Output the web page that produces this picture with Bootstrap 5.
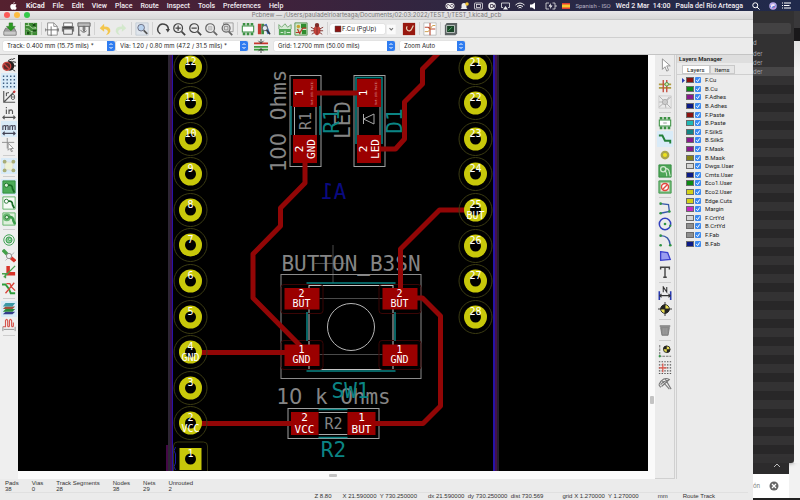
<!DOCTYPE html>
<html lang="en">
<head>
<meta charset="utf-8">
<meta name="viewport" content="width=device-width, initial-scale=1">
<title>Pcbnew — TEST_1.kicad_pcb</title>
<link href="https://cdn.jsdelivr.net/npm/bootstrap@5.3.0/dist/css/bootstrap.min.css" rel="stylesheet">
<style>
  body { font-family: Inter, "Liberation Sans", sans-serif; font-size: 6px; line-height: 8px; color: #222; background: #f4f4f4; }
  a { color: inherit; text-decoration: none; }
  svg { display: block; }
  .menubar { height: 11px; font-family: Roboto, "Liberation Sans", sans-serif; font-weight: 500; font-size: 7px; color: #f3eef3; background: linear-gradient(90deg, #55212f, #43213a 30%, #2c2742 60%, #202a4c); padding: 0 9px 0 10px; }
  .menubar nav { gap: 8px; margin-left: 9px; }
  .menubar .tray { gap: 5px; }
  .menubar .dim { font-size: 6px; font-weight: 400; color: #b5b1c4; }
  .strong { font-weight: 600; }
  .appwin { background: #ebebeb; }
  .titlebar { height: 9px; background: linear-gradient(#e9e7e9, #d8d8d8); color: #777; border-bottom: 1px solid #c8c8c8; }
  .doctitle { padding-right: 60px; }
  .lights { gap: 4px; width: 60px; padding-left: 4px; }
  .lights button { width: 6px; height: 6px; border: 0; border-radius: 50%; padding: 0; }
  .l-red { background: #fc5b57; } .l-yel { background: #fdbc40; } .l-grn { background: #34c84a; }
  .toolrow { height: 18px; padding-left: 2px; border-bottom: 1px solid #cfcfcf; }
  .selrow { height: 17px; padding-left: 3px; gap: 1px; border-bottom: 1px solid #c4c4c4; }
  .ib { width: 16px; height: 16px; padding: 1px; border: 0; background: transparent; flex: none; }
  .ib svg { width: 14px; height: 14px; }
  .ib.on { background: #d9ebf8; }
  .vs { width: 1px; height: 13px; margin: 0 2px; background: #d2d2d2; flex: none; }
  .hs { height: 1px; width: 12px; margin: 2px 0; background: #cdcdcd; flex: none; }
  .pick { height: 10px; background: #fff; border-radius: 2px; box-shadow: 0 0 1px #999; overflow: hidden; }
  .pick select { appearance: none; border: 0; background: #fff; color: #222; padding: 0 0 0 4px; font-size: 6px; line-height: 10px; flex: 1; min-width: 0; height: 10px; }
  .pick svg { width: 8px; height: 10px; flex: none; }
  .w-track { width: 112px; } .w-via { width: 132px; } .w-grid { width: 121px; } .w-zoom { width: 65px; } .w-layer { width: 55px; }
  .leftbar { width: 18px; padding-top: 2px; background: #efefef; }
  .rightbar { width: 20px; padding-top: 2px; border-right: 1px solid #d0d0d0; border-bottom: 1px solid #d0d0d0; }
  .board { background: #000; min-height: 0; }
  .board svg { width: 100%; height: 100%; }
  .hbar { height: 8px; background: #fbfbfb; } .vbar { width: 7px; background: #fafafa; }
  .hbar i, .vbar i { background: #c3c3c3; border-radius: 1px; }
  .hbar i { width: 8px; height: 3px; } .vbar i { width: 4px; height: 8px; }
  .g-a { flex: 82; } .g-b { flex: 18; } .g-c { flex: 1; }
  .layers { width: 77px; border-left: 1px solid #d0d0d0; margin-left: 1px; font-family: Roboto, "Liberation Sans", sans-serif; }
  .layers h2 { font-size: 6px; line-height: 8px; margin: 0; padding-left: 2px; background: #dedede; color: #222; }
  .tabrow { padding: 2px 0 0 5px; border-bottom: 1px solid #cfcfcf; height: 12px; }
  .tabrow button { font-size: 6px; line-height: 7px; padding: 0 4px; border: 1px solid #c9c9c9; background: #e6e6e6; color: #222; }
  .tabrow button.cur { background: #fff; }
  .layerlist { display: grid; grid-auto-rows: 1fr; height: 173px; padding: 1px 0 0 5px; }
  .layerlist label { display: flex; align-items: center; }
  .layerlist input[type=checkbox] { appearance: none; width: 6px; height: 6px; margin: 0 4px 0 1px; border-radius: 1px; background: #3c8af0 url("data:image/svg+xml,%3Csvg xmlns='http://www.w3.org/2000/svg' viewBox='0 0 6 6'%3E%3Cpath d='M1.3 3.2L2.6 4.6 4.7 1.4' fill='none' stroke='white'/%3E%3C/svg%3E"); }
  .arrow { width: 3px; height: 5px; }
  .chip { width: 8px; height: 6px; border: 1px solid #6b6b6b; margin-left: 1px; }
  .stats { height: 21px; padding: 1px 5px 0; line-height: 6px; font-family: "Liberation Sans", sans-serif; color: #333; }
  .stats dl { gap: 13px; margin: 0; }
  .stats dt { font-weight: 400; } .stats dd { margin: 0; }
  .coords { gap: 11px; padding-right: 33px; height: 8px; border-top: 1px solid #e0e0e0; line-height: 7px; }
  .behind { width: 47px; background: #f2f2f2; }
  .finder { width: 41px; background: #323132; color: #a9a9a9; border-radius: 0 0 3px 0; box-shadow: 0 0 4px #777; }
  .finder .head { height: 26px; padding: 12px 3px 3px 0; }
  .finder input { width: 100%; height: 11px; border: 0; border-radius: 0 2px 2px 0; background: #434243; display: block; }
  .finder li { height: 9px; line-height: 9px; }
  .finder li:first-child { height: 12px; line-height: 12px; }
  .finder .lit { background: #474647; }
  .stripes { background: repeating-linear-gradient(#333233 0 9px, #282728 9px 18px); }
  .finder .foot { height: 6px; }
  .edge { width: 6px; background: linear-gradient(#39383a 0 17px, #19181a 17px 30px, #e4e4e4 30px, #f4f4f4 60px); }
  .under { height: 11px; width: 36px; background: #2c2b2c; color: #aaa; padding-right: 8px; }
  .note { height: 24px; width: 36px; background: #fff; color: #777; padding-right: 10px; }
  .note button { border: 0; padding: 0; background: none; width: 10px; height: 10px; }
  .baseline { height: 2px; background: #222; }
  .mono { font-family: "DejaVu Sans Mono", monospace; text-anchor: middle; }
  .plain { font-family: "DejaVu Sans", sans-serif; }
</style>
<script src="https://cdn.jsdelivr.net/npm/bootstrap@5.3.0/dist/js/bootstrap.bundle.min.js"></script>
</head>
<body class="vh-100 d-flex flex-column overflow-hidden">

<header class="menubar d-flex align-items-center text-nowrap">
  <svg width="7" height="8" viewBox="0 0 14 16" fill="#fff" role="img" aria-label="Apple"><path d="M9.5 0C9.6 2 8 3.600 6.600 3.500 6.500 1.700 8 .2 9.500 0zM7 4.600C7.800 4.600 8.600 3.900 10 3.900c1.200 0 2.300.6 3 1.600-2.600 1.600-2.200 5 .5 6-.6 1.700-2 4.200-3.600 4.200-1 0-1.500-.6-2.700-.6s-1.700.6-2.700.6C2.600 15.700.5 12.200.5 9c0-3 2-5 4-5 1.200 0 1.900.6 2.500.6z"/></svg>
  <nav class="d-flex flex-grow-1">
    <a href="#" class="fw-bold">KiCad</a><a href="#">File</a><a href="#">Edit</a><a href="#">View</a><a href="#">Place</a><a href="#">Route</a><a href="#">Inspect</a><a href="#">Tools</a><a href="#">Preferences</a><a href="#">Help</a>
  </nav>
  <div class="tray d-flex align-items-center">
    <svg width="10" height="8" viewBox="0 0 20 16"><rect x="1" y="2" width="18" height="12" rx="6" fill="#eee"/><path d="M6 11a3 3 0 1 1 3-4l3 3a3 3 0 1 0-1-3" fill="none" stroke="#3a2a44" stroke-width="1.500"/></svg>
    <svg width="9" height="8" viewBox="0 0 18 16"><path d="M3 12V7a5 5 0 0 1 10 0v5l2 2H1z" fill="#eee"/><circle cx="14" cy="4" r="3.500" fill="#f4c534"/></svg>
    <svg width="9" height="8" viewBox="0 0 18 16" fill="none" stroke="#eee" stroke-width="1.500"><rect x="1" y="2" width="16" height="12" rx="1"/><rect x="5" y="5" width="8" height="6"/></svg>
    <svg width="8" height="8" viewBox="0 0 16 16"><circle cx="8" cy="8" r="7.500" fill="#eee"/><path d="M5 5h5v6H5zM10 8l3-2v5z" fill="none" stroke="#33283f" stroke-width="1.500"/></svg>
    <svg width="9" height="8" viewBox="0 0 18 16"><path d="M4 11H1V2h16v9h-3" fill="none" stroke="#eee" stroke-width="1.600"/><path d="M9 8l5 7H4z" fill="#eee"/></svg>
    <svg width="10" height="8" viewBox="0 0 20 16" fill="none" stroke="#eee" stroke-width="2"><path d="M1 6q9-8 18 0M4 9q6-5 12 0M7 12q3-2.500 6 0"/></svg>
    <svg width="6" height="8" viewBox="0 0 12 16"><path d="M0 5h4l6-4v14l-6-4H0z" fill="#fff"/></svg>
    <svg class="ms-1" width="12" height="8" viewBox="0 0 24 16"><path d="M8 2H2v12h6M15 2h5v12h-5M22 6v4" fill="none" stroke="#eee" stroke-width="1.500"/><path d="M12 2L7 9h4l-1 5 5-7h-4z" fill="#fff"/></svg>
    <svg width="8" height="6" viewBox="0 0 16 12"><path fill="#e03b30" d="M0 0h16v12H0z"/><path fill="#f8c730" d="M0 3h16v6H0z"/></svg>
    <span class="dim">Spanish - ISO</span>
    <span>Wed 2 Mar&nbsp; 14:00</span>
    <span>Paula del Río Arteaga</span>
    <svg class="ms-1" width="8" height="8" viewBox="0 0 16 16" fill="none" stroke="#fff" stroke-width="2"><circle cx="6.500" cy="6.500" r="5"/><path d="M10 10l5 5"/></svg>
    <svg class="ms-1" width="8" height="8" viewBox="0 0 16 16"><circle cx="8" cy="8" r="7.500" fill="#b7a7e8"/><path d="M2 9q6-7 12-2-5 8-12 2z" fill="#3c7ee0"/><path d="M4 6q5-4 9 1-6 0-9 5z" fill="#f5e3f2"/><path d="M7 12q4 0 5-5 1 7-5 5z" fill="#e24e8c"/></svg>
    <svg width="9" height="7" viewBox="0 0 18 14" stroke="#fff" stroke-width="2"><path d="M0 2h2M4 2h14M0 7h2M4 7h11M0 12h2M4 12h14"/></svg>
  </div>
</header>

<div class="d-flex flex-grow-1 overflow-hidden">
<main class="appwin d-flex flex-column flex-grow-1 overflow-hidden">
  <div class="titlebar d-flex align-items-center">
    <div class="lights d-flex"><button class="l-red" aria-label="Close"></button><button class="l-yel" aria-label="Minimise"></button><button class="l-grn" aria-label="Zoom"></button></div>
    <div class="doctitle flex-grow-1 text-center text-nowrap">Pcbnew — /Users/pauladelrioarteaga/Documents/02:03:2022/TEST_1/TEST_1.kicad_pcb</div>
  </div>

  <div class="toolrow d-flex align-items-center">
    <button class="ib" aria-label="Save"><svg viewBox="0 0 16 16"><path d="M3 7h10l2 4v4H1v-4z" fill="#9b9b9b" stroke="#777"/><path d="M1.500 11h13v3.500h-13z" fill="#c9c9c9"/><path d="M7 1h4v4h3l-5 5-5-5h3z" fill="#2c9b23" stroke="#1d6b17" stroke-width=".6"/></svg></button>
    <i class="vs"></i>
    <button class="ib" aria-label="Board setup"><svg viewBox="0 0 16 16"><path fill="#3d8a34" d="M1 1h14v14H1z"/><path d="M2 4h4l3 3h5M2 8h3l3 3h6M5 1v3M11 1v4l3 2M3 14v-3M9 15v-3" stroke="#b9dcae" fill="none"/><path fill="#174d13" d="M10 2h3v3h-3zM3 11h3v3H3zM10 9h4v2h-4z"/></svg></button>
    <i class="vs"></i>
    <button class="ib" aria-label="Page settings"><svg viewBox="0 0 16 16"><path d="M3 1h7l4 4v10H3z" fill="#fff" stroke="#888"/><path d="M10 1v4h4" fill="none" stroke="#888"/><path d="M0 9h16M7 5v11M0 7v4M15 7v4" stroke="#666" fill="none"/></svg></button>
    <button class="ib" aria-label="Print"><svg viewBox="0 0 16 16"><path d="M3 1h10v4H3z" fill="#fff" stroke="#666"/><path d="M1 5h14v6H1z" fill="#777"/><path d="M3 8h10v6H3z" fill="#eee" stroke="#555"/><path d="M2 6h12" stroke="#333"/></svg></button>
    <button class="ib" aria-label="Plot"><svg viewBox="0 0 16 16" fill="none" stroke="#666"><path d="M1 1h14v4H1z" fill="#bbb"/><path d="M2 5v10M14 5v10M1 15h3M12 15h3" stroke-width="1.500"/><path d="M7 5l2 0 0 4-1 2-1-2z" fill="#999"/><path d="M4 9q3 5 7 1"/></svg></button>
    <i class="vs"></i>
    <button class="ib" aria-label="Undo"><svg viewBox="0 0 16 16"><path d="M2 7l5-5v3q8 0 7 6-1 3-5 4 3-3 2-5-1-2-4-2v3z" fill="#f3c64d"/></svg></button>
    <button class="ib" aria-label="Redo"><svg viewBox="0 0 16 16"><path d="M14 7L9 2v3q-8 0-7 6 1 3 5 4-3-3-2-5 1-2 4-2v3z" fill="#d3e8cc"/></svg></button>
    <i class="vs"></i>
    <button class="ib" aria-label="Find"><svg viewBox="0 0 16 16"><path d="M1 1h14v14H1z" fill="#dfe5ec" stroke="#c4ccd4"/><circle cx="7" cy="6.500" r="3.800" fill="#b9d2ee" stroke="#667"/><path d="M10 9.500l4 4" stroke="#555" stroke-width="2"/></svg></button>
    <i class="vs"></i>
    <button class="ib" aria-label="Refresh"><svg viewBox="0 0 16 16"><path d="M5 13.500A6 6 0 1 1 14 9" fill="none" stroke="#444" stroke-width="1.700"/><path d="M11 8h5l-2.500 4z" fill="#444"/></svg></button>
    <button class="ib" aria-label="Zoom in"><svg viewBox="0 0 16 16" fill="none" stroke="#444"><circle cx="7" cy="7" r="5" stroke-width="1.400"/><path d="M4 7h6M7 4v6" stroke-width="1.400"/><path d="M11 11l4 4" stroke-width="2"/></svg></button>
    <button class="ib" aria-label="Zoom out"><svg viewBox="0 0 16 16" fill="none" stroke="#444"><circle cx="7" cy="7" r="5" stroke-width="1.400"/><path d="M4 7h6" stroke-width="1.400"/><path d="M11 11l4 4" stroke-width="2"/></svg></button>
    <button class="ib" aria-label="Zoom to fit"><svg viewBox="0 0 16 16" fill="none" stroke="#666"><circle cx="7" cy="7" r="5" stroke-width="1.400"/><path d="M5 5h4v4H5z" fill="#ccc" stroke="#bbb"/><path d="M11 11l4 4" stroke-width="2"/></svg></button>
    <button class="ib" aria-label="Zoom to selection"><svg viewBox="0 0 16 16" fill="none" stroke="#666"><path d="M4 1h11v10H4z" stroke="#999"/><circle cx="7" cy="7" r="4.500" fill="#ddd" stroke-width="1.400"/><path d="M5 5h4v4H5z" stroke="#888"/><path d="M10 11l4 4" stroke-width="2"/></svg></button>
    <i class="vs"></i>
    <button class="ib" aria-label="Footprint editor"><svg viewBox="0 0 16 16"><path d="M1.500 4.500h13v7h-13z" fill="#fff" stroke="#3b9142" stroke-width="1.200"/><path d="M2 2.500h3M6.500 2.500h3M11 2.500h3M2 13.500h3M6.500 13.500h3M11 13.500h3" stroke="#3b9142" stroke-width="3"/></svg></button>
    <button class="ib" aria-label="Footprint libraries"><svg viewBox="0 0 16 16"><path d="M1 2h4v12H1z" fill="#c43b31"/><path d="M5 2h3v12H5z" fill="#3b8a3b"/><path d="M8 3l3-1 4 11-3 1z" fill="#3a6ab4"/><circle cx="9" cy="7" r="3" fill="#dfe9f5" stroke="#555"/><path d="M11 9l4 5" stroke="#333" stroke-width="1.500"/></svg></button>
    <i class="vs"></i>
    <button class="ib" aria-label="Update from schematic"><svg viewBox="0 0 16 16"><path d="M1 8h14v7H1z" fill="#54a758"/><path d="M1 8V3l3 3 4-4 3 4 4-3v5" fill="#d6ead4" stroke="#6da46d"/><path d="M3 12h3M8 10v4M10 12h4" stroke="#e8f5e8"/></svg></button>
    <button class="ib" aria-label="Load netlist"><svg viewBox="0 0 16 16"><path fill="#cfe6c9" stroke="#55904f" d="M1 1h14v14H1z"/><path fill="#2f8c2e" d="M8 2h6v5H8zM9 9h5v5H9z"/><circle cx="5" cy="5" r="2" fill="#c8a52f"/><path d="M2 12h5l3-5h4M4 8l3 6" stroke="#b8342a" fill="none" stroke-width="1.400"/></svg></button>
    <button class="ib" aria-label="Design rules check"><svg viewBox="0 0 16 16"><ellipse cx="8" cy="9.500" rx="4" ry="5.500" fill="#c5433b"/><circle cx="8" cy="3.500" r="2.500" fill="#7c2c28"/><path d="M8 5v10M1 6l4 2M1 10h4M2 14l3-2M15 6l-4 2M15 10h-4M14 14l-3-2" stroke="#7c2c28"/></svg></button>
    <i class="vs"></i>
    <label class="pick w-layer d-flex align-items-center ps-1"><svg viewBox="0 0 8 10"><path fill="#8b1210" stroke="#555" stroke-width=".5" d="M1 2h6v6H1z"/></svg><select class="p-0" aria-label="Active layer"><option>F.Cu (PgUp)</option></select></label>
    <button class="ib" aria-label="Open layer list"><svg viewBox="0 0 16 16"><path fill="#fafafa" d="M1 3h10v11H1z"/><path d="M4 7l2 2 2-2" fill="none" stroke="#777" stroke-width="1.300"/></svg></button>
    <button class="ib" aria-label="Layer pair"><svg viewBox="0 0 16 16"><path fill="#98180f" d="M1 1h14v14H1z"/><path d="M6 5a3 3 0 1 0 5 3l2-4" fill="none" stroke="#e8d2b8" stroke-width="1.400"/></svg></button>
    <i class="vs"></i>
    <button class="ib" aria-label="Interactive router"><svg viewBox="0 0 16 16"><path fill="#fff" stroke="#bbb" d="M1 1h14v14H1z"/><path d="M8 1v14M2 6h4l2 2h6" stroke="#ba4a36" fill="none" stroke-width="1.300"/><path d="M2 11h4l2-3 3-4h3" stroke="#c7923a" fill="none"/></svg></button>
    <i class="vs"></i>
    <button class="ib" aria-label="Scripting console"><svg viewBox="0 0 16 16"><path d="M3 1h12v12l-2 2H1V4z" fill="#5d6364"/><path d="M3 4h9v8H3z" fill="#1a4428" stroke="#c5cdc8"/><path d="M5 10l4-4" stroke="#55b872"/></svg></button>
  </div>

  <div class="selrow d-flex align-items-center">
    <label class="pick w-track d-flex"><select aria-label="Track width"><option>Track: 0.400 mm (15.75 mils) *</option></select><svg viewBox="0 0 8 10"><path fill="#2f7cf0" d="M0 0h8v10H0z"/><path d="M2.500 4L4 2.500 5.500 4M2.500 6L4 7.500 5.500 6" fill="none" stroke="#fff"/></svg></label>
    <label class="pick w-via d-flex"><select aria-label="Via size"><option>Via: 1.20 / 0.80 mm (47.2 / 31.5 mils) *</option></select><svg viewBox="0 0 8 10"><path fill="#2f7cf0" d="M0 0h8v10H0z"/><path d="M2.500 4L4 2.500 5.500 4M2.500 6L4 7.500 5.500 6" fill="none" stroke="#fff"/></svg></label>
    <button class="ib ms-1" aria-label="Automatic track width"><svg viewBox="0 0 16 16"><path d="M0 5h16" stroke="#c7362c" stroke-width="2"/><path d="M0 9h16M0 12h16" stroke="#3e9a3e" stroke-width="2"/><path d="M8 0v5M8 11v5M5 2l3 3 3-3M5 14l3-3 3 3" stroke="#333" fill="none"/></svg></button>
    <label class="pick w-grid d-flex mx-1"><select aria-label="Grid"><option>Grid: 1.2700 mm (50.00 mils)</option></select><svg viewBox="0 0 8 10"><path fill="#2f7cf0" d="M0 0h8v10H0z"/><path d="M2.500 4L4 2.500 5.500 4M2.500 6L4 7.500 5.500 6" fill="none" stroke="#fff"/></svg></label>
    <label class="pick w-zoom d-flex"><select aria-label="Zoom"><option>Zoom Auto</option></select><svg viewBox="0 0 8 10"><path fill="#2f7cf0" d="M0 0h8v10H0z"/><path d="M2.500 4L4 2.500 5.500 4M2.500 6L4 7.500 5.500 6" fill="none" stroke="#fff"/></svg></label>
  </div>

  <div class="d-flex flex-grow-1 overflow-hidden">
    <div class="leftbar d-flex flex-column align-items-center flex-shrink-0">
      <button class="ib" aria-label="DRC off"><svg viewBox="0 0 16 16"><ellipse cx="9" cy="9" rx="5" ry="5.500" fill="#26201f"/><path d="M11 2l4-2M12 4l4 1M13 9h3M12 13l3 2M7 3l4-2" stroke="#222"/><circle cx="5.500" cy="9.500" r="4.500" fill="#5c2a2a" stroke="#c8433e" stroke-width="1.600"/><path d="M2.500 6.500l6 6" stroke="#c8433e" stroke-width="1.600"/></svg></button>
      <button class="ib on" aria-label="Show grid"><svg viewBox="0 0 16 16"><path d="M1 2.500h14M1 6.500h14M1 10.500h14M1 14.500h14" stroke="#3c5c80" stroke-width="1.600" stroke-dasharray="1.600 2.500"/></svg></button>
      <button class="ib" aria-label="Polar coordinates"><svg viewBox="0 0 16 16" fill="none" stroke="#555"><path d="M2 1v13h13M2 14L14 2" stroke-width="1.300"/><path d="M5 7V3M5 4q1-1 3-1" stroke="#333"/><ellipse cx="12.500" cy="8" rx="2" ry="3"/><path d="M10.500 8h4"/><circle cx="14" cy="2" r="1" fill="#c33" stroke="#c33"/></svg></button>
      <button class="ib" aria-label="Units in inches"><svg viewBox="0 0 16 16" fill="none" stroke="#555" stroke-width="1.300"><path d="M5 4v5M5 1v1.500M8 9V4M8 6q3-3 4 0v3M1 13h14M3 11l-2 2 2 2M13 11l2 2-2 2"/></svg></button>
      <button class="ib on" aria-label="Units in millimetres"><svg viewBox="0 0 16 16" fill="none" stroke="#445" stroke-width="1.300"><path d="M1 9V4M1 5q3-2 3 0v4M4 5q3-2 3 0v4M9 9V4M9 5q3-2 3 0v4M12 5q3-2 3 0v4M1 13h14M3 11l-2 2 2 2M13 11l2 2-2 2"/></svg></button>
      <button class="ib" aria-label="Cursor shape"><svg viewBox="0 0 16 16" fill="none" stroke="#888"><path d="M6 0v12M0 5h14"/><path d="M7 6v8l2-2 2 4 1-1-2-3h3z" fill="#fff"/></svg></button>
      <i class="hs"></i>
      <button class="ib on" aria-label="Ratsnest"><svg viewBox="0 0 16 16"><path d="M3 3l10 1-1 9-9-1z" fill="#eef2d5" stroke="#ddd"/><g fill="#a8ad77"><circle cx="3" cy="3" r="2.200"/><circle cx="13" cy="3" r="2.200"/><circle cx="3" cy="13" r="2.200"/><circle cx="13" cy="13" r="2.200"/></g></svg></button>
      <i class="hs"></i>
      <button class="ib on" aria-label="Filled zones"><svg viewBox="0 0 16 16"><path fill="#4cab57" stroke="#2d8a3c" d="M1 1h14v14H1z"/><circle cx="5" cy="6" r="2.300" fill="#dff2dc" stroke="#186b25"/><path d="M7 6q5-1 5 4l2 4" fill="none" stroke="#186b25" stroke-width="2"/></svg></button>
      <button class="ib" aria-label="Unfilled zones"><svg viewBox="0 0 16 16"><path fill="#f6fbf5" stroke="#58ae60" d="M1 1h14v14H1z"/><circle cx="5" cy="6" r="2.300" fill="#fff" stroke="#186b25"/><path d="M7 6q5-1 5 4l2 4" fill="none" stroke="#186b25" stroke-width="2"/></svg></button>
      <button class="ib" aria-label="Zone outlines"><svg viewBox="0 0 16 16"><path fill="#dff0dc" stroke="#58ae60" d="M1 1h14v14H1z"/><circle cx="5.500" cy="6" r="4.500" fill="#6bb873"/><circle cx="5.500" cy="6" r="2" fill="#dff2dc" stroke="#186b25"/><path d="M8 6q5-1 5 4l2 4" fill="none" stroke="#3b9c4a" stroke-width="3"/></svg></button>
      <i class="hs"></i>
      <button class="ib" aria-label="Outline pads"><svg viewBox="0 0 16 16" fill="none" stroke="#2e9844"><circle cx="8" cy="8" r="6"/><circle cx="8" cy="8" r="3.500" fill="#8dcc98"/><circle cx="9" cy="7" r="1.500" fill="#fff"/></svg></button>
      <button class="ib" aria-label="Outline vias"><svg viewBox="0 0 16 16" fill="none"><path d="M1 1l6 6" stroke="#43a048" stroke-width="4"/><path d="M9 9l6 5" stroke="#d8342a" stroke-width="4"/><path d="M4 13L14 4" stroke="#aaa"/><circle cx="8" cy="8" r="3" fill="#eee" stroke="#888"/></svg></button>
      <button class="ib" aria-label="Outline tracks"><svg viewBox="0 0 16 16" fill="none"><path d="M7 1v9h8" stroke="#d8342a" stroke-width="4"/><path d="M0 10h7M2 14L15 1M4 10v5" stroke="#4aa04f" stroke-width="1.500"/></svg></button>
      <button class="ib" aria-label="High contrast"><svg viewBox="0 0 16 16" fill="none"><path d="M0 4h4l4 5 2 5h5" stroke="#2f9d3c" stroke-width="2.200"/><path d="M5 3h4l2 4 4 4M4 14L14 2" stroke="#d8443a" stroke-width="1.500"/></svg></button>
      <i class="hs"></i>
      <button class="ib on" aria-label="Layers manager"><svg viewBox="0 0 16 16"><path d="M1 14l3-3h11l-3 3z" fill="#333c8c"/><path d="M1 11l3-3h11l-3 3z" fill="#2e8b3b"/><path d="M1 8l3-3h11l-3 3z" fill="#a0503c"/><path d="M1 5l3-4h11l-3 4z" fill="#3c98a5"/></svg></button>
      <button class="ib" aria-label="Microwave toolbar"><svg viewBox="0 0 16 16" fill="none"><path d="M1 10h3V3q1.500-3 2.500 0v6q1 2 2 0V3q1-3 2.500 0v6q1 2 2 0V5" stroke="#d5554d" stroke-width="1.300"/><path d="M1 10v5M15 10v5M2 13h12" stroke="#888"/></svg></button>
      <i class="hs"></i>
    </div>

    <div class="d-flex flex-column flex-grow-1 overflow-hidden">
      <div class="board flex-grow-1">
        <svg id="pcb" viewBox="18 55 631 416" preserveAspectRatio="xMidYMid slice" role="img" aria-label="Board canvas">
          <g fill="none">
            <path d="M169.500 55V471" stroke="#5a4d66"/><path d="M171.500 55V471" stroke="#7a1f96"/><path d="M173 55V471" stroke="#2713a8"/>
            <path d="M167.500 445V471" stroke="#86108c"/><path d="M176 447q-3 4 0 7v9q-3 4 0 7" stroke="#1c1c9c"/>
            <path d="M494.500 55V471" stroke="#2713a8" stroke-width="2"/><path d="M496.500 55V471" stroke="#8a2299"/><path d="M498.500 55V471" stroke="#4b3f55"/>
          </g>
          <g fill="none" stroke="#6a6a6a">
            <path d="M333.500 245V283M315 263.500H346M320 298.500H383M320 354.500H383" stroke="#4a4a4a"/>
            <rect x="281.500" y="274.500" width="140" height="104" stroke="#8b8b8b"/>
            <rect x="309.500" y="285.500" width="84" height="84" stroke="#c4c4c4"/>
            <circle cx="351.500" cy="327" r="23.500" stroke="#b5b5b5"/>
            <g stroke="#3a0505"><rect x="281.500" y="284.500" width="42" height="29" rx="3"/><rect x="379.500" y="284.500" width="42" height="29" rx="3"/><rect x="281.500" y="340.500" width="42" height="29" rx="3"/><rect x="379.500" y="340.500" width="42" height="29" rx="3"/></g>
            <path d="M307 283H396M307 371H396M307.500 312V341M395.500 312V341" stroke="#0a8484" stroke-width="1.500"/>
            <rect x="288.500" y="408.500" width="91" height="30" stroke="#a0a0a0"/>
            <path d="M319 412.500H348M319 434.500H348" stroke="#aaa"/><path d="M319 409.500H348M319 437.500H348" stroke="#0a8484" stroke-width="1.500"/>
            <rect x="290.500" y="75.500" width="31" height="91" stroke="#a0a0a0"/><rect x="354.500" y="75.500" width="31" height="91" stroke="#a0a0a0"/>
            <path d="M295 107V135M316.500 107V135M358.500 107V135M380.500 107V135" stroke="#aaa"/>
            <path d="M291.500 106V135M320.500 106V135M356.500 144V77.500H382.500V144" stroke="#0a8484" stroke-width="1.500"/>
            <path d="M364 114V124M374.500 114V124L364 119ZM364 119" stroke="#aaa"/>
          </g>
          <g class="mono" font-size="21" fill="#858585">
            <text x="351.500" y="271">BUTTON_B3SN</text>
            <text x="334" y="404">1<tspan class="plain">0</tspan> k Ohms</text>
            <text transform="translate(286 121) rotate(-90)">1<tspan class="plain">00</tspan> Ohms</text>
            <text transform="translate(350 120) rotate(-90)">LED</text>
          </g>
          <g class="mono" font-size="15" fill="#858585"><text x="334" y="429">R2</text><text transform="translate(311 121) rotate(-90)">R1</text></g>
          <g fill="none" stroke="#920606" stroke-width="5" stroke-linejoin="round" stroke-linecap="round">
            <path d="M305.500 160V183L281 208V226L253.500 254V298L302 347"/>
            <path d="M191 352.500H300M191 423.500H300M312 93H362M370 149H396L405 139V102L423 84V69L440 52"/>
            <path d="M476 210H440L401 249V298H423L441 316V406L423.500 423.500H365"/>
          </g>
          <g fill="#9b0000">
            <path d="M285 288h35v21.500h-35zM383 288h35v21.500h-35zM285 344.500h35V366h-35zM383 344.500h35V366h-35z"/>
            <path d="M291.500 412H319v23h-27.500zM348 412h28v23h-28zM293.500 79h24v28h-24zM293.500 135h24v28h-24zM357.500 79h24v28h-24zM357.500 135h24v28h-24z"/>
          </g>
          <g id="holes"></g>
          <g class="mono" font-size="21" fill="#0b8484">
            <text x="351" y="398">SW1</text><text x="334" y="457">R2</text>
            <text transform="translate(339 121) rotate(-90)">R1</text><text transform="translate(402 121) rotate(-90)">D1</text>
          </g>
          <text class="mono" font-size="21" fill="#0a0a80" transform="translate(334 199) scale(-1 1)">A1</text>
          <g class="mono" font-size="10" fill="#fff">
            <text x="302" y="297">2</text><text x="302" y="307">BUT</text><text x="400" y="297">2</text><text x="400" y="307">BUT</text>
            <text x="302" y="353">1</text><text x="302" y="363">GND</text><text x="400" y="353">1</text><text x="400" y="363">GND</text>
          </g>
          <g class="mono" font-size="11" fill="#fff">
            <text x="305" y="421">2</text><text x="305" y="433">VCC</text><text x="362" y="421">1</text><text x="362" y="433">BUT</text>
            <text transform="translate(303 93) rotate(-90)">1</text><text transform="translate(303 149) rotate(-90)">2</text><text transform="translate(315 149) rotate(-90)">GND</text>
            <text transform="translate(367 93) rotate(-90)">1</text><text transform="translate(367 149) rotate(-90)">2</text><text transform="translate(379 149) rotate(-90)">LED</text>
          </g>
          <g class="mono" font-size="3" fill="#e0a0a0"><text transform="translate(313 93) rotate(-90)">Net-(R1-Pad1)</text><text transform="translate(377 93) rotate(-90)">Net-(R1-Pad1)</text></g>
        </svg>
      </div>
      <div class="hbar d-flex align-items-center"><span class="g-c"></span><i></i><span class="g-c"></span></div>
    </div>
    <div class="vbar d-flex flex-column align-items-center flex-shrink-0"><span class="g-a"></span><i></i><span class="g-b"></span></div>

    <div class="rightbar d-flex flex-column align-items-center flex-shrink-0">
      <button class="ib" aria-label="Select"><svg viewBox="0 0 16 16"><path d="M5 1v12l3-3 2 5 2-1-2-5h4z" fill="#fff" stroke="#888"/></svg></button>
      <i class="hs"></i>
      <button class="ib" aria-label="Highlight net"><svg viewBox="0 0 16 16" fill="none"><path d="M1 6h14M1 10h14" stroke="#b09a40" stroke-width="2"/><path d="M6 1v14M10 1v14" stroke="#c55242" stroke-width="1.600"/><circle cx="10" cy="6" r="2" stroke="#3b9441" fill="#dde8b0"/></svg></button>
      <button class="ib" aria-label="Local ratsnest"><svg viewBox="0 0 16 16" fill="none" stroke="#aaa"><path d="M1 1l14 14M15 2L1 14M1 8l7 0 5-6M8 8l1 7"/><circle cx="8" cy="8" r="3" fill="#ccc"/><path d="M1 1h14v14H1z" stroke="#ccc"/></svg></button>
      <i class="hs"></i>
      <button class="ib" aria-label="Add footprint"><svg viewBox="0 0 16 16"><path d="M1.500 4.500h13v7h-13z" fill="#fff" stroke="#3b9142" stroke-width="1.200"/><path d="M6 8h4" stroke="#888"/><path d="M2 2.500h3M6.500 2.500h3M11 2.500h3M2 13.500h3M6.500 13.500h3M11 13.500h3" stroke="#3b9142" stroke-width="3"/></svg></button>
      <button class="ib on" aria-label="Route tracks"><svg viewBox="0 0 16 16"><path d="M1 4h4l3 6h6v3" fill="none" stroke="#23803a" stroke-width="2.200"/></svg></button>
      <button class="ib" aria-label="Add via"><svg viewBox="0 0 16 16"><circle cx="8" cy="8" r="5" fill="#a9a44c"/><circle cx="8" cy="8" r="2.400" fill="#ece21d"/></svg></button>
      <button class="ib" aria-label="Add filled zone"><svg viewBox="0 0 16 16"><path fill="#4ea558" stroke="#2f8b3b" d="M1 1h14v14H1z"/><circle cx="6" cy="6" r="3" fill="none" stroke="#d0e8cf" stroke-width="1.500"/><path d="M8 5q5 0 5 5l1 4M7 8q3 0 3 6" fill="none" stroke="#d0e8cf" stroke-width="1.200"/></svg></button>
      <button class="ib" aria-label="Add keepout"><svg viewBox="0 0 16 16"><path fill="#76bd7c" stroke="#3a9446" d="M1 1h14v14H1z"/><path fill="#f4dede" d="M3 3h10v10H3z"/><circle cx="8" cy="8" r="4" fill="#fff" stroke="#e0483e" stroke-width="1.600"/><path d="M5.500 10.500l5-5" stroke="#e0483e" stroke-width="1.600"/></svg></button>
      <i class="hs"></i>
      <button class="ib" aria-label="Draw line"><svg viewBox="0 0 16 16"><path d="M3 3l9 1 1 8L3 14" fill="none" stroke="#3658a8" stroke-width="1.500"/><g fill="#2f9444"><circle cx="3" cy="3" r="1.500"/><circle cx="13" cy="12" r="1.500"/><circle cx="3" cy="14" r="1.500"/></g></svg></button>
      <button class="ib" aria-label="Draw circle"><svg viewBox="0 0 16 16"><circle cx="8" cy="8" r="6.500" fill="none" stroke="#3040c0" stroke-width="1.700"/><circle cx="8" cy="8" r="1.500" fill="#2f9444"/><circle cx="14" cy="10" r="1.300" fill="#2f9444"/></svg></button>
      <button class="ib" aria-label="Draw arc"><svg viewBox="0 0 16 16"><path d="M3 3q10 0 11 11" fill="none" stroke="#3658a8" stroke-width="1.700"/><g fill="#2f9444"><circle cx="3" cy="3" r="1.500"/><circle cx="14" cy="14" r="1.500"/><circle cx="3" cy="14" r="1.500"/></g></svg></button>
      <button class="ib" aria-label="Draw polygon"><svg viewBox="0 0 16 16"><path d="M3 3l8 1 3 8-11 1z" fill="#9a9df0" stroke="#3a40cc" stroke-width="1.500"/></svg></button>
      <button class="ib" aria-label="Add text"><svg viewBox="0 0 16 16"><path d="M3 5V2.500h10V5M8 2.500V14M6 14h4" fill="none" stroke="#444" stroke-width="1.600"/></svg></button>
      <i class="hs"></i>
      <button class="ib" aria-label="Add dimension"><svg viewBox="0 0 16 16" fill="none"><path d="M1.500 6v10M14.500 6v10" stroke="#2638b0" stroke-width="1.800"/><path d="M2 11h12M4 9l-2 2 2 2M12 9l2 2-2 2M6 7V1l4 6V1" stroke="#333" stroke-width="1.200"/></svg></button>
      <button class="ib" aria-label="Add target"><svg viewBox="0 0 16 16"><circle cx="8" cy="8" r="5" fill="#e8dd54" stroke="#222"/><path d="M8 3v5H3a5 5 0 0 1 5-5zM8 13V8h5a5 5 0 0 1-5 5z" fill="#222"/><path d="M8 0v16M0 8h16" stroke="#222"/></svg></button>
      <i class="hs"></i>
      <button class="ib" aria-label="Delete"><svg viewBox="0 0 16 16"><path d="M3 5h10l-1.500 9h-7z" fill="#8d8d8d" stroke="#777"/><path d="M2 3.500h12" stroke="#888" stroke-width="2"/><path d="M6 6v7M8 6v7M10 6v7" stroke="#aaa" stroke-width=".6"/></svg></button>
      <i class="hs"></i>
      <button class="ib" aria-label="Set drill origin"><svg viewBox="0 0 16 16"><path d="M2 1v13h13" fill="none" stroke="#777" stroke-width="1.200" stroke-dasharray="3 1"/><circle cx="10" cy="6" r="3.800" fill="#e8dd54" stroke="#222"/><path d="M10 2v4H6a4 4 0 0 1 4-4zM10 10V6h4a4 4 0 0 1-4 4z" fill="#222"/><circle cx="2" cy="14" r="1.300" fill="#2f9444"/></svg></button>
      <button class="ib" aria-label="Set grid origin"><svg viewBox="0 0 16 16"><path d="M1 2h14M1 5.500h14M1 9h14M1 12.500h14M1 15.500h14" stroke="#555" stroke-width="1.300" stroke-dasharray="1.600 1.500"/><path d="M5.500 4v10M1 9h9" stroke="#e0584c" stroke-width="1.400"/></svg></button>
      <button class="ib" aria-label="Measure"><svg viewBox="0 0 16 16" fill="none" stroke="#777"><path d="M1 10Q6 0 13 4L4 12M3 10q4-5 9-5M8 3l7 12M5 6l8 9M1 10l2 3" stroke-width="1.200"/></svg></button>
    </div>

    <aside class="layers flex-shrink-0">
      <h2 class="strong">Layers Manager</h2>
      <div class="tabrow d-flex align-items-start"><button class="cur">Layers</button><button>Items</button></div>
      <div id="layerlist" class="layerlist"></div>
    </aside>
  </div>

  <footer class="stats flex-shrink-0 text-nowrap overflow-hidden">
    <dl class="d-flex">
      <div><dt>Pads</dt><dd>38</dd></div><div><dt>Vias</dt><dd>0</dd></div><div><dt>Track Segments</dt><dd>28</dd></div><div><dt>Nodes</dt><dd>38</dd></div><div><dt>Nets</dt><dd>29</dd></div><div><dt>Unrouted</dt><dd>2</dd></div>
    </dl>
    <div class="coords d-flex justify-content-end">
      <span>Z 8.80</span><span>X 21.590000&nbsp; Y 730.250000</span><span>dx 21.590000&nbsp; dy 730.250000&nbsp; dist 730.569</span><span class="ms-2">grid X 1.270000&nbsp; Y 1.270000</span><span class="ms-2 me-1">mm</span><span>Route Track</span>
    </div>
  </footer>
</main>

<aside class="behind d-flex flex-column flex-shrink-0 overflow-hidden">
  <div class="d-flex flex-grow-1">
    <div class="finder d-flex flex-column">
      <div class="head"><input type="text" aria-label="Search"></div>
      <ul class="list-unstyled m-0"><li>d</li><li>der</li><li>der</li><li class="lit">der</li></ul>
      <div class="stripes flex-grow-1"></div>
      <div class="foot"></div>
    </div>
    <div class="edge"></div>
  </div>
  <div class="under d-flex justify-content-end"><svg width="8" height="5" viewBox="0 0 8 5"><path d="M1 4l3-3 3 3" fill="none" stroke="#bbb"/></svg></div>
  <div class="note d-flex align-items-center justify-content-between"><span>ón</span><button aria-label="Clear"><svg viewBox="0 0 10 10"><circle cx="5" cy="5" r="4.500" fill="#666"/><path d="M3 3l4 4M7 3L3 7" stroke="#fff" stroke-width="1.200"/></svg></button></div>
  <div class="baseline"></div>
</aside>
</div>

<script>
  // Layer names with their swatch colours
  const layers = [["F.Cu","#8b1210"],["B.Cu","#0c8a14"],["F.Adhes","#8a1a8c"],["B.Adhes","#0b1a86"],["F.Paste","#8b1210"],["B.Paste","#1fb8b4"],["F.SilkS","#128484"],["B.SilkS","#8a1a8c"],["F.Mask","#8a1a8c"],["B.Mask","#85841a"],["Dwgs.User","#d4d4d4"],["Cmts.User","#0b1a86"],["Eco1.User","#0c8a14"],["Eco2.User","#d4d018"],["Edge.Cuts","#d4d018"],["Margin","#c428c0"],["F.CrtYd","#d4d4d4"],["B.CrtYd","#8e8e8e"],["F.Fab","#8e8e8e"],["B.Fab","#0b1a86"]];
  document.getElementById("layerlist").innerHTML = layers.map(([name, colour], i) =>
    `<label><svg class="arrow" viewBox="0 0 3 5">${i ? "" : '<path d="M0 0L3 2.500 0 5z" fill="#2b3fb4"/>'}</svg><span class="chip" style="background:${colour}"></span><input type="checkbox" checked>${name}</label>`).join("");

  // Through-hole pads: two columns on a 35.6 unit pitch
  const nets = { 2: "VCC", 4: "GND", 25: "BUT" };
  const pad = (n, x, y) => {
    const body = n === 1
      ? `<rect x="${x - 17}" y="${y - 17}" width="34" height="34" rx="4" fill="none" stroke="#36360e"/><path fill="#c8c80a" d="M${x - 11} ${y - 11}h22v22h-22z"/>`
      : `<circle cx="${x}" cy="${y}" r="16.500" fill="none" stroke="#3b3b12"/><circle cx="${x}" cy="${y}" r="11.500" fill="#c8c80a"/>`;
    const net = nets[n] ? `<text x="${x}" y="${y + 9}">${nets[n]}</text>` : "";
    return `${body}<circle cx="${x}" cy="${y}" r="5.500" fill="#000"/><text x="${x}" y="${y - 2}">${n}</text>${net}`;
  };
  let out = "";
  for (let n = 1; n <= 12; n++) out += pad(n, 191, Math.round(459 - (n - 1) * 35.6));
  for (let n = 21; n <= 28; n++) out += pad(n, 476, Math.round(67.5 + (n - 21) * 35.6));
  document.getElementById("holes").innerHTML = `<g class="mono" font-size="10" fill="#fff">${out}</g>`;
</script>
</body>
</html>
